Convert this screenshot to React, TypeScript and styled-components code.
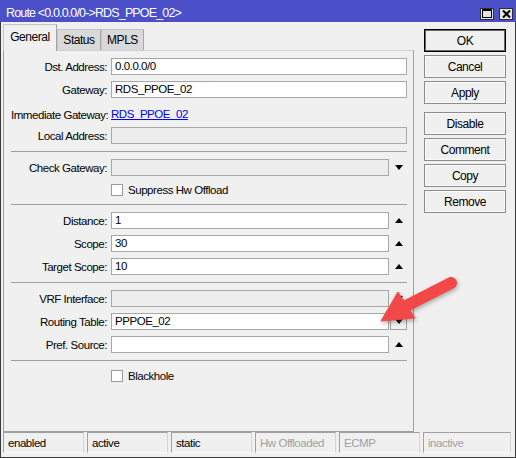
import styled, { createGlobalStyle } from 'styled-components';

const GlobalStyle = createGlobalStyle`
  html, body {
    margin: 0;
    padding: 0;
    background: #f0f0f0;
  }
  body {
    font-family: "Liberation Sans", Arial, sans-serif;
    font-size: 11.5px;
    letter-spacing: -0.45px;
    color: #000;
  }
  * {
    box-sizing: border-box;
  }
`;

type FieldRow = {
  label: string;
  value?: string;
  disabled?: boolean;
  arrow?: 'up' | 'down';
  boxed?: boolean;
};

const sections: FieldRow[][] = [
  [
    { label: 'Distance:', value: '1', arrow: 'up' },
    { label: 'Scope:', value: '30', arrow: 'up' },
    { label: 'Target Scope:', value: '10', arrow: 'up' },
  ],
  [
    { label: 'VRF Interface:', disabled: true, arrow: 'down' },
    { label: 'Routing Table:', value: 'PPPOE_02', arrow: 'down', boxed: true },
    { label: 'Pref. Source:', arrow: 'up' },
  ],
];

const statusCells = [
  { text: 'enabled' },
  { text: 'active' },
  { text: 'static' },
  { text: 'Hw Offloaded', muted: true },
  { text: 'ECMP', muted: true },
  { text: 'inactive', muted: true },
];

const Row: React.FC<FieldRow> = ({ label, value, disabled, arrow, boxed }) => (
  <FormRow>
    <Label>{label}</Label>
    <Field $disabled={disabled}>{value}</Field>
    {arrow && (
      <ArrowSlot>
        <ArrowBox $boxed={boxed}>
          <Arrow $dir={arrow} />
        </ArrowBox>
      </ArrowSlot>
    )}
  </FormRow>
);

const App: React.FC = () => {
  return (
    <>
      <GlobalStyle />
      <Window>
        <TitleBar>
          <Title>Route &lt;0.0.0.0/0-&gt;RDS_PPOE_02&gt;</Title>
          <TitleButtons>
            <TitleButton>
              <svg width="10" height="9" viewBox="0 0 10 9">
                <rect x="0.5" y="0.5" width="9" height="8" fill="none" stroke="#000" />
                <rect x="0" y="0" width="10" height="2" fill="#000" />
              </svg>
            </TitleButton>
            <TitleButton>
              <svg width="9" height="8" viewBox="0 0 9 8">
                <path d="M1 0.5 L8 7.5 M8 0.5 L1 7.5" stroke="#000" strokeWidth="2" />
              </svg>
            </TitleButton>
          </TitleButtons>
        </TitleBar>

        <Content>
          <LeftColumn>
            <Tabs>
              <Tab $active $width={54}>General</Tab>
              <Tab $width={44}>Status</Tab>
              <Tab $width={43}>MPLS</Tab>
            </Tabs>
            <Panel>
              <Section>
                <Row label="Dst. Address:" value="0.0.0.0/0" />
                <Row label="Gateway:" value="RDS_PPOE_02" />
                <TextRow>
                  <Label>Immediate Gateway:</Label>
                  <Link>RDS_PPOE_02</Link>
                </TextRow>
                <Row label="Local Address:" disabled />
              </Section>
              <Section>
                <Row label="Check Gateway:" disabled arrow="down" />
                <CheckRow>
                  <Checkbox />
                  <span>Suppress Hw Offload</span>
                </CheckRow>
              </Section>
              {sections.map((rows, i) => (
                <Section key={i}>
                  {rows.map((r) => (
                    <Row key={r.label} {...r} />
                  ))}
                </Section>
              ))}
              <Section>
                <CheckRow>
                  <Checkbox />
                  <span>Blackhole</span>
                </CheckRow>
              </Section>
            </Panel>
          </LeftColumn>

          <ButtonColumn>
            <Button $default>OK</Button>
            <Button>Cancel</Button>
            <Button>Apply</Button>
            <Button $spaced>Disable</Button>
            <Button>Comment</Button>
            <Button>Copy</Button>
            <Button>Remove</Button>
          </ButtonColumn>

          <StatusBar>
            {statusCells.map((c) => (
              <StatusCell key={c.text} $muted={c.muted}>
                {c.text}
              </StatusCell>
            ))}
          </StatusBar>
        </Content>

        <Annotation width="516" height="458" viewBox="0 0 516 458">
          <g fill="#f24848" stroke="#f24848">
            <line x1="451" y1="283" x2="404" y2="307" strokeWidth="12" strokeLinecap="round" />
            <polygon points="381,321 398,292 415,318" strokeWidth="1" strokeLinejoin="round" />
          </g>
        </Annotation>
      </Window>
    </>
  );
};
export default App;

const Window = styled.div`
  position: relative;
  width: 516px;
  height: 458px;
  display: flex;
  flex-direction: column;
  background: #f0f0f0;
`;

const TitleBar = styled.div`
  height: 22px;
  flex: none;
  display: flex;
  align-items: center;
  justify-content: space-between;
  padding: 4px 3px 0 6px;
  background: #4b50c9;
  color: #fff;
`;

const Title = styled.span`
  font-size: 12.5px;
  letter-spacing: -0.85px;
  white-space: nowrap;
`;

const TitleButtons = styled.div`
  display: flex;
  gap: 5px;
  margin-top: 1px;
`;

const TitleButton = styled.div`
  width: 14px;
  height: 12px;
  display: flex;
  align-items: center;
  justify-content: center;
  background: #e4e4e4;
  border: 1px solid #303030;
`;

const Content = styled.div`
  flex: 1;
  display: grid;
  grid-template-columns: 421px 82px 1fr;
  grid-template-rows: auto 1fr;
  padding: 2px 0 0 2px;
  border: 1px solid #3a3a3a;
  border-top: none;
`;

const LeftColumn = styled.div`
  display: flex;
  flex-direction: column;
  padding-right: 10px;
`;

const Tabs = styled.div`
  height: 27px;
  margin-bottom: -1px;
  display: flex;
  align-items: flex-start;
  position: relative;
  z-index: 1;
`;

const Tab = styled.div<{ $active?: boolean; $width: number }>`
  width: ${(p) => p.$width}px;
  height: ${(p) => (p.$active ? '27px' : '21px')};
  margin-top: ${(p) => (p.$active ? '0' : '5px')};
  display: flex;
  align-items: center;
  justify-content: center;
  padding-bottom: ${(p) => (p.$active ? '2px' : '0')};
  background: ${(p) => (p.$active ? '#f0f0f0' : '#d9d9d9')};
  border: 1px solid #c4c4c4;
  border-bottom: none;
  border-right-color: #a6a6a6;
  font-size: 12px;
`;

const Panel = styled.div`
  height: 382px;
  padding: 0 6px 0 7px;
  border: 1px solid #a0a0a0;
  border-top-color: #d0d0d0;
`;

const Section = styled.div`
  display: flex;
  flex-direction: column;
  gap: 6px;
  padding: 7px 0;

  & + & {
    border-top: 1px solid #a0a0a0;
  }
`;

const FormRow = styled.div`
  display: flex;
  align-items: center;
  height: 17px;
`;

const TextRow = styled(FormRow)`
  align-items: flex-end;
  padding-top: 3px;
`;

const Label = styled.span`
  width: 96px;
  flex: none;
  margin-right: 4px;
  text-align: right;
  white-space: nowrap;
`;

const Field = styled.div<{ $disabled?: boolean }>`
  flex: 1;
  height: 17px;
  padding: 0 3px;
  line-height: 15px;
  background: ${(p) => (p.$disabled ? '#ededed' : '#fff')};
  border: 1px solid #a8a8a8;
  white-space: nowrap;
`;

const ArrowSlot = styled.div`
  width: 18px;
  height: 17px;
  flex: none;
  display: flex;
  align-items: center;
  justify-content: flex-end;
`;

const ArrowBox = styled.div<{ $boxed?: boolean }>`
  width: 17px;
  height: 17px;
  display: flex;
  align-items: center;
  justify-content: center;
  border: 1px solid ${(p) => (p.$boxed ? '#a0a0a0' : 'transparent')};
`;

const Arrow = styled.span<{ $dir: 'up' | 'down' }>`
  width: 0;
  height: 0;
  border-left: 4.5px solid transparent;
  border-right: 4.5px solid transparent;
  ${(p) =>
    p.$dir === 'up'
      ? 'border-bottom: 5px solid #000;'
      : 'border-top: 5px solid #000;'}
`;

const Link = styled.span`
  color: #0000f0;
  text-decoration: underline;
  line-height: 14px;
`;

const CheckRow = styled.div`
  display: flex;
  align-items: center;
  gap: 5px;
  height: 15px;
  padding-left: 100px;
`;

const Checkbox = styled.span`
  width: 12px;
  height: 12px;
  background: #fff;
  border: 1px solid #9a9a9a;
`;

const ButtonColumn = styled.div`
  display: flex;
  flex-direction: column;
  gap: 3px;
  padding-top: 5px;
`;

const Button = styled.div<{ $default?: boolean; $spaced?: boolean }>`
  height: 23px;
  display: flex;
  align-items: center;
  justify-content: center;
  margin-top: ${(p) => (p.$spaced ? '5px' : '0')};
  background: #f0f0f0;
  border: 1px solid ${(p) => (p.$default ? '#000' : '#8c8c8c')};
  box-shadow: ${(p) => (p.$default ? 'inset 0 0 0 1px #6a6a6a' : 'inset 0 0 0 1px #fafafa')};
  font-size: 12px;
`;

const StatusBar = styled.div`
  grid-column: 1 / -1;
  align-self: end;
  display: grid;
  grid-template-columns: repeat(5, 81px) 88px;
  column-gap: 3px;
  padding: 0 0 4px 0;
`;

const StatusCell = styled.div<{ $muted?: boolean }>`
  height: 21px;
  padding: 1px 0 0 4px;
  display: flex;
  align-items: center;
  border-top: 1px solid #a0a0a0;
  border-left: 1px solid #a0a0a0;
  border-right: 1px solid #d4d4d4;
  border-bottom: 1px solid #fafafa;
  color: ${(p) => (p.$muted ? '#a0a0a0' : '#000')};
  white-space: nowrap;
`;

const Annotation = styled.svg`
  position: absolute;
  left: 0;
  top: 0;
  pointer-events: none;
  filter: drop-shadow(1px 2px 2px rgba(0, 0, 0, 0.3));
`;
